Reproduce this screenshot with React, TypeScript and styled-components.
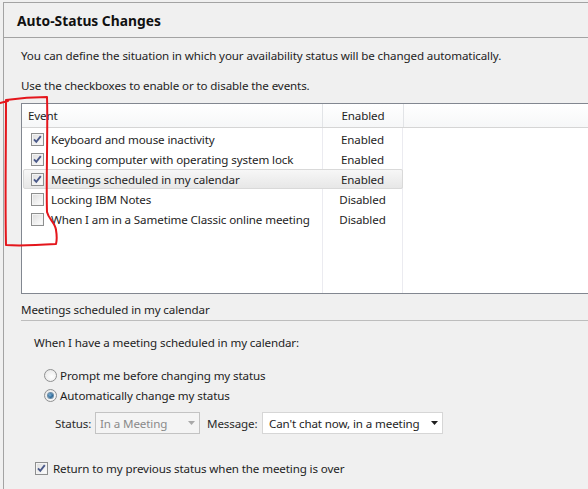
import React from 'react';
import styled, { createGlobalStyle, css } from 'styled-components';

const GlobalStyle = createGlobalStyle`
  html, body {
    margin: 0;
    padding: 0;
    background: #f0f0f0;
    overflow: hidden;
  }
  body {
    font-family: "Noto Sans", "Open Sans", sans-serif;
    font-size: 11.6px;
    letter-spacing: -0.12px;
    color: #1e1e1e;
  }
`;

type EventRow = { label: string; enabled: boolean; selected?: boolean };

const events: EventRow[] = [
  { label: 'Keyboard and mouse inactivity', enabled: true },
  { label: 'Locking computer with operating system lock', enabled: true },
  { label: 'Meetings scheduled in my calendar', enabled: true, selected: true },
  { label: 'Locking IBM Notes', enabled: false },
  { label: 'When I am in a Sametime Classic online meeting', enabled: false },
];

/* little win7-style controls */

const CheckBox = styled.span`
  position: relative;
  flex: none;
  display: inline-block;
  box-sizing: border-box;
  width: 13px;
  height: 13px;
  border: 1px solid #8e8f8f;
  background: linear-gradient(135deg, #dcdcdc 0%, #f5f5f5 70%, #ffffff 100%);
  box-shadow: inset 0 0 0 1px #f4f4f4;

  svg {
    position: absolute;
    left: 0;
    top: 0;
  }
`;

function Check({ checked }: { checked: boolean }) {
  return (
    <CheckBox>
      {checked && (
        <svg width="11" height="11" viewBox="0 0 11 11">
          <path d="M2 5.3 L4.3 7.8 L8.8 2.2" fill="none" stroke="#4b5a8a" strokeWidth="1.9" />
        </svg>
      )}
    </CheckBox>
  );
}

const RadioCircle = styled.span<{ $on: boolean }>`
  flex: none;
  display: inline-flex;
  align-items: center;
  justify-content: center;
  box-sizing: border-box;
  width: 13px;
  height: 13px;
  border-radius: 50%;
  border: 1px solid #8f9091;
  background: radial-gradient(circle at 60% 60%, #ffffff 0%, #e2e2e2 100%);

  &::after {
    content: '';
    width: 5px;
    height: 5px;
    border-radius: 50%;
    ${(p) =>
      p.$on
        ? css`
            background: radial-gradient(circle at 40% 40%, #7fb2d8 0%, #1d5a8a 70%, #163f63 100%);
            box-shadow: 0 0 0 1px #6f8fa8;
          `
        : css`
            background: transparent;
          `}
  }
`;

const Arrow = ({ color }: { color: string }) => (
  <svg width="7" height="4" viewBox="0 0 7 4">
    <path d="M0 0 H7 L3.5 4 Z" fill={color} />
  </svg>
);

/* layout */

const Page = styled.div`
  position: relative;
  width: 588px;
  height: 489px;
  overflow: hidden;
`;

const Frame = styled.div`
  margin: 2px 0 0 3px;
  width: 640px;
  height: 520px;
  border-top: 1px solid #a3a3a3;
  border-left: 1px solid #a3a3a3;
  background: #f0f0f0;
`;

const TitleBar = styled.div`
  height: 34px;
  padding-left: 13px;
  display: flex;
  align-items: center;
  border-bottom: 1px solid #a3a3a3;
  font-size: 13.8px;
  letter-spacing: 0;
  font-weight: bold;
  color: #111;
`;

const Content = styled.div`
  padding-left: 17px;
`;

const Intro = styled.p<{ $gap: number }>`
  margin: ${(p) => p.$gap}px 0 0;
  line-height: 16px;
  white-space: nowrap;
`;

const Table = styled.div`
  margin-top: 9px;
  width: 600px;
  height: 191px;
  box-sizing: border-box;
  border: 1px solid #828790;
  background: #fff;
`;

const HeaderRow = styled.div`
  height: 24px;
  box-sizing: border-box;
  display: grid;
  grid-template-columns: 301px 81px 1fr;
  border-bottom: 1px solid #d5d5d5;
  background: linear-gradient(#ffffff, #f6f7f8);
`;

const HeaderCell = styled.div<{ $center?: boolean }>`
  box-sizing: border-box;
  display: flex;
  align-items: center;
  justify-content: ${(p) => (p.$center ? 'center' : 'flex-start')};
  padding-left: ${(p) => (p.$center ? 0 : 6)}px;
  border-right: 1px solid #e2e4e7;
  &:last-child {
    border-right: none;
  }
`;

const Body = styled.div`
  height: 165px;
  padding-top: 1px;
  box-sizing: border-box;
  background: linear-gradient(
    to right,
    transparent 300px,
    #ebebf0 300px,
    #ebebf0 301px,
    transparent 301px,
    transparent 380px,
    #ebebf0 380px,
    #ebebf0 381px,
    transparent 381px
  );
`;

const Row = styled.div<{ $selected?: boolean }>`
  margin-left: 1px;
  width: 380px;
  height: 20px;
  box-sizing: border-box;
  display: grid;
  grid-template-columns: 299px 1fr;
  align-items: center;
  border: 1px solid transparent;
  border-radius: 2px;
  ${(p) =>
    p.$selected &&
    css`
      border-color: #d9d9d9;
      background: linear-gradient(#f7f7f7, #e7e7e7);
    `}
`;

const EventCell = styled.div`
  display: flex;
  align-items: center;
  gap: 7px;
  padding-left: 7px;
  white-space: nowrap;
`;

const StateCell = styled.div`
  text-align: center;
`;

const GroupTitle = styled.div`
  margin-top: 8px;
  line-height: 16px;
  padding-bottom: 2px;
  border-bottom: 1px solid #bdbdbd;
`;

const Group = styled.div`
  padding-left: 13px;
`;

const Lead = styled.div`
  margin-top: 14px;
  line-height: 16px;
`;

const Options = styled.div`
  margin-top: 14px;
  padding-left: 10px;
  display: flex;
  flex-direction: column;
`;

const RadioRow = styled.label`
  height: 20px;
  display: flex;
  align-items: center;
  gap: 3px;
`;

const FieldRow = styled.div`
  margin-top: 7px;
  padding-left: 21px;
  height: 22px;
  display: flex;
  align-items: center;
`;

const FieldLabel = styled.span<{ $w: number }>`
  width: ${(p) => p.$w}px;
  flex: none;
  color: #2a2a2a;
`;

const Combo = styled.div<{ $w: number; $disabled?: boolean }>`
  width: ${(p) => p.$w}px;
  height: 22px;
  box-sizing: border-box;
  display: flex;
  align-items: center;
  justify-content: space-between;
  padding: 0 4px 0 ${(p) => (p.$disabled ? 4 : 6)}px;
  border: 1px solid ${(p) => (p.$disabled ? '#c3c3c3' : '#d6d6d6')};
  background: ${(p) => (p.$disabled ? '#f4f4f4' : '#ffffff')};
  color: ${(p) => (p.$disabled ? '#8a8a8a' : '#1e1e1e')};
  white-space: nowrap;
`;

const Spacer = styled.span<{ $w: number }>`
  width: ${(p) => p.$w}px;
  flex: none;
`;

const ReturnRow = styled.label`
  margin-top: 24px;
  margin-left: 1px;
  height: 20px;
  display: flex;
  align-items: center;
  gap: 5px;
`;

/* hand-drawn red marker around the checkbox column */
const Marker = styled.svg`
  position: absolute;
  left: 0;
  top: 0;
  pointer-events: none;
`;

function RedMarker() {
  return (
    <Marker width="588" height="489">
      <path
        d="M0 103 L8 101 M6 100 C20 98 35 97 47 97 C48 130 46 180 47 212 C49 220 55 222 56 230 C57 236 57 240 56 244 C40 245 20 246 6 245 C5 200 6 150 6 100"
        fill="none"
        stroke="#e4161c"
        strokeWidth="2"
        strokeLinejoin="round"
        strokeLinecap="round"
      />
    </Marker>
  );
}

export default function App() {
  return (
    <Page>
      <GlobalStyle />
      <Frame>
        <TitleBar>Auto-Status Changes</TitleBar>
        <Content>
          <Intro $gap={10}>
            You can define the situation in which your availability status will be changed automatically.
          </Intro>
          <Intro $gap={14}>Use the checkboxes to enable or to disable the events.</Intro>

          <Table>
            <HeaderRow>
              <HeaderCell>Event</HeaderCell>
              <HeaderCell $center>Enabled</HeaderCell>
              <HeaderCell />
            </HeaderRow>
            <Body>
              {events.map((ev) => (
                <Row key={ev.label} $selected={ev.selected}>
                  <EventCell>
                    <Check checked={ev.enabled} />
                    {ev.label}
                  </EventCell>
                  <StateCell>{ev.enabled ? 'Enabled' : 'Disabled'}</StateCell>
                </Row>
              ))}
            </Body>
          </Table>

          <GroupTitle>Meetings scheduled in my calendar</GroupTitle>
          <Group>
            <Lead>When I have a meeting scheduled in my calendar:</Lead>
            <Options>
              <RadioRow>
                <RadioCircle $on={false} />
                Prompt me before changing my status
              </RadioRow>
              <RadioRow>
                <RadioCircle $on />
                Automatically change my status
              </RadioRow>
            </Options>
            <FieldRow>
              <FieldLabel $w={40}>Status:</FieldLabel>
              <Combo $w={105} $disabled>
                In a Meeting
                <Arrow color="#a9a9a9" />
              </Combo>
              <Spacer $w={7} />
              <FieldLabel $w={55}>Message:</FieldLabel>
              <Combo $w={181}>
                Can't chat now, in a meeting
                <Arrow color="#1e1e1e" />
              </Combo>
            </FieldRow>
            <ReturnRow>
              <Check checked />
              Return to my previous status when the meeting is over
            </ReturnRow>
          </Group>
        </Content>
      </Frame>
      <RedMarker />
    </Page>
  );
}
